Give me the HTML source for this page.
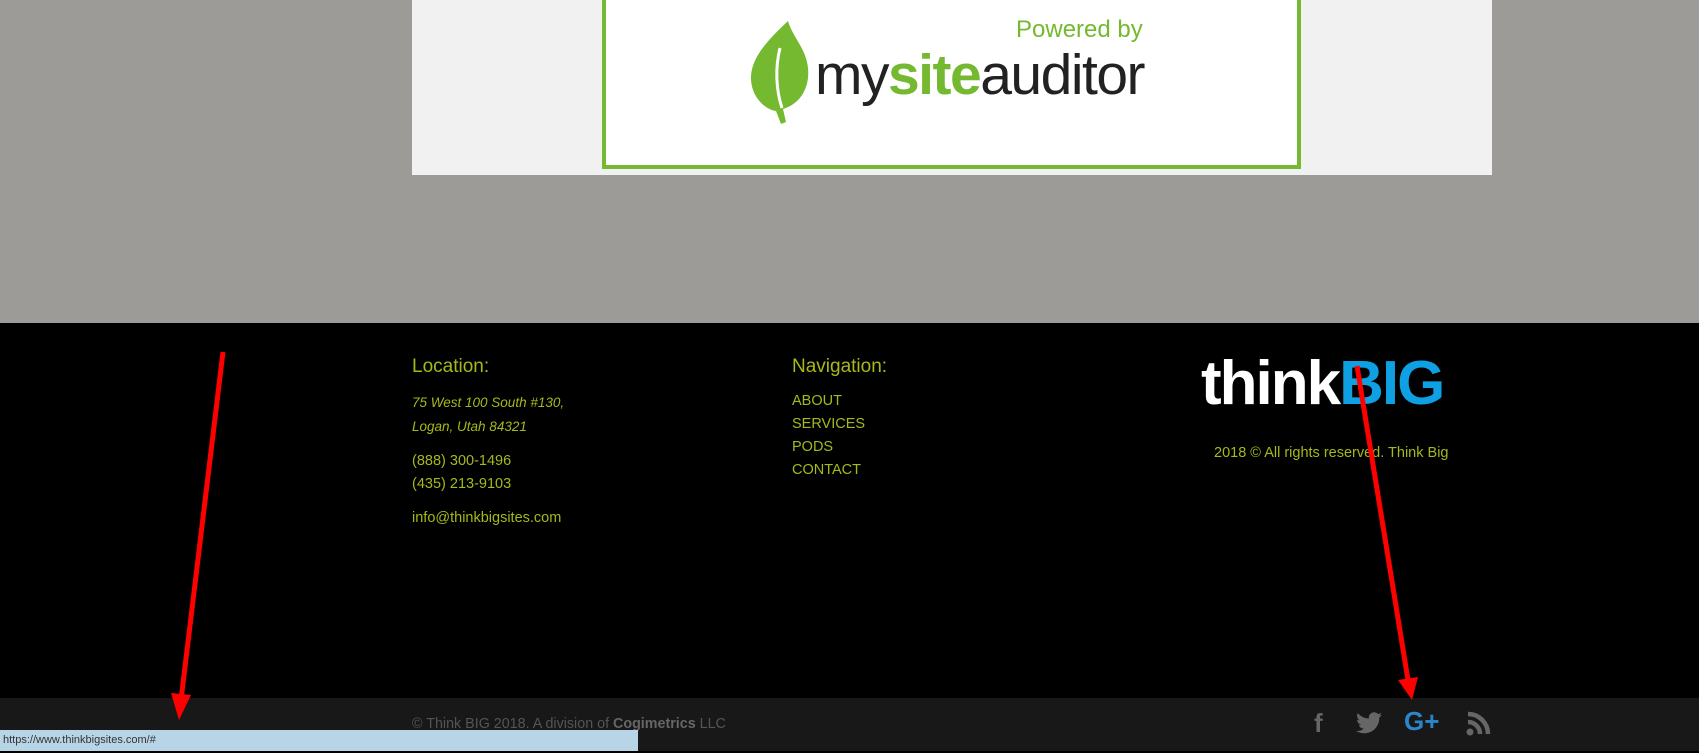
<!DOCTYPE html>
<html><head><meta charset="utf-8"><style>
*{margin:0;padding:0;box-sizing:border-box}
body{width:1699px;height:753px;overflow:hidden;background:#9c9b98;font-family:"Liberation Sans",sans-serif;position:relative}
.abs{position:absolute}
.f{color:#a6b81a;font-size:14.5px}
</style></head><body>
<div class="abs" style="left:412px;top:0;width:1080px;height:175px;background:#f1f1f1"></div>
<div class="abs" style="left:602px;top:-4px;width:699px;height:173px;background:#fff;border:4px solid #74b92f"></div>
<svg class="abs" style="left:748px;top:18px" width="70" height="110" viewBox="0 0 70 110">
<path d="M40 3 C20 22 2 40 3 62 C4 80 18 92 28 93 L33 106 L38 104 L35 91 C52 86 62 70 60 50 C58 30 45 20 40 3Z" fill="#74b92f"/>
<path d="M32 30 C27 50 28 72 34 90" stroke="#fff" stroke-width="3" fill="none"/>
</svg>
<div class="abs" style="left:815px;top:40px;font-size:57px;letter-spacing:-1.5px;color:#222;line-height:70px">my<span style="color:#74b92f;font-weight:bold">site</span>auditor</div>
<div class="abs" style="left:1016px;top:16px;font-size:24px;color:#74b92f">Powered by</div>
<div class="abs" style="left:0;top:323px;width:1699px;height:375px;background:#000"></div>
<div class="abs" style="left:412px;top:356px;font-size:19px;color:#a6b81a">Location:</div>
<div class="abs f" style="left:412px;top:391px;font-style:italic;font-size:13.5px;line-height:24px">75 West 100 South #130,<br>Logan, Utah 84321</div>
<div class="abs f" style="left:412px;top:450px;line-height:23px">(888) 300-1496<br>(435) 213-9103</div>
<div class="abs f" style="left:412px;top:510px">info@thinkbigsites.com</div>
<div class="abs" style="left:792px;top:356px;font-size:19px;color:#a6b81a">Navigation:</div>
<div class="abs f" style="left:792px;top:390px;line-height:23px">ABOUT<br>SERVICES<br>PODS<br>CONTACT</div>
<div class="abs" style="left:1201px;top:346px;font-size:62px;font-weight:bold;color:#fff;letter-spacing:-2px;line-height:76px">think<span style="color:#0ea0e3">BIG</span></div>
<div class="abs f" style="left:1214px;top:445px">2018 © All rights reserved. Think Big</div>
<div class="abs" style="left:0;top:698px;width:1699px;height:55px;background:#181818"></div>
<div class="abs" style="left:412px;top:716px;font-size:14.3px;color:#555">© Think BIG 2018. A division of <b style="color:#666">Cogimetrics</b> LLC</div>
<div class="abs" style="left:1314px;top:708px;font-size:26px;font-weight:bold;color:#666">f</div>
<svg class="abs" style="left:1356px;top:712px" width="26" height="22" viewBox="0 0 24 20"><path d="M24 2.4c-.9.4-1.8.7-2.8.8 1-.6 1.8-1.6 2.2-2.7-1 .6-2 1-3.1 1.2A4.9 4.9 0 0 0 11.9 6 14 14 0 0 1 1.7.9a4.9 4.9 0 0 0 1.5 6.6c-.8 0-1.600-.3-2.2-.6 0 2.4 1.7 4.4 3.9 4.8-.7.2-1.5.2-2.2.1.6 2 2.4 3.4 4.6 3.4A9.9 9.9 0 0 1 0 17.300 14 14 0 0 0 7.5 19.5c9.1 0 14-7.5 14-14v-.6c1-.7 1.8-1.6 2.5-2.5z" fill="#666"/></svg>
<div class="abs" style="left:1404px;top:706px;font-size:26px;font-weight:bold;color:#2a86c8">G+</div>
<svg class="abs" style="left:1466px;top:710px" width="26" height="26" viewBox="0 0 26 26"><circle cx="4" cy="22" r="3.5" fill="#666"/><path d="M2 12a12 12 0 0 1 12 12M2 4a20 20 0 0 1 20 20" stroke="#666" stroke-width="4.5" fill="none"/></svg>
<div class="abs" style="left:0;top:730px;width:638px;height:21px;background:#b8d5e8;font-size:11px;color:#333;padding:4px 3px">https://www.thinkbigsites.com/#</div>
<div class="abs" style="left:0;top:751px;width:1699px;height:2px;background:#000"></div>
<svg class="abs" style="left:0;top:0" width="1699" height="753"><g stroke="#f00" stroke-width="5" fill="#f00"><line x1="223" y1="352" x2="181" y2="700"/><line x1="1357" y1="366" x2="1408" y2="680"/></g>
<polygon points="171,693 191,695 179,720" fill="#f00"/><polygon points="1398,680 1418,677 1412,700" fill="#f00"/></svg>
</body></html>
